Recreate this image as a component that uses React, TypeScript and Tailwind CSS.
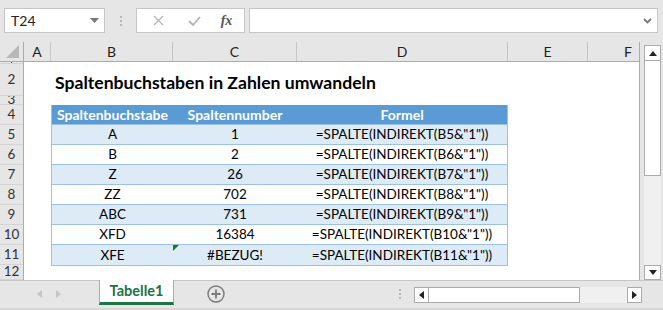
import React from 'react';

const cols = [
  { l: 'A', w: 27 },
  { l: 'B', w: 122 },
  { l: 'C', w: 124 },
  { l: 'D', w: 211 },
  { l: 'E', w: 80 },
];

const rowHeads = [
  { n: '1', h: 2 },
  { n: '2', h: 32 },
  { n: '3', h: 9 },
  { n: '4', h: 20 },
  { n: '5', h: 20 },
  { n: '6', h: 20 },
  { n: '7', h: 20 },
  { n: '8', h: 20 },
  { n: '9', h: 20 },
  { n: '10', h: 20 },
  { n: '11', h: 20 },
  { n: '12', h: 15 },
];

const data = [
  ['A', '1', '=SPALTE(INDIREKT(B5&"1"))'],
  ['B', '2', '=SPALTE(INDIREKT(B6&"1"))'],
  ['Z', '26', '=SPALTE(INDIREKT(B7&"1"))'],
  ['ZZ', '702', '=SPALTE(INDIREKT(B8&"1"))'],
  ['ABC', '731', '=SPALTE(INDIREKT(B9&"1"))'],
  ['XFD', '16384', '=SPALTE(INDIREKT(B10&"1"))'],
  ['XFE', '#BEZUG!', '=SPALTE(INDIREKT(B11&"1"))'],
];

function FormulaBar() {
  return (
    <div className="h-[42px] relative flex items-start pt-[8px] pl-[4px]">
      {/* name box */}
      <div className="w-[101px] h-[25px] bg-white border border-[#c6c6c6] flex items-center pl-[6px] pr-[5px]">
        <span className="flex-1 text-[14px] text-[#222]">T24</span>
        <svg width="9" height="5" viewBox="0 0 9 5"><path d="M0 0h9L4.5 5z" fill="#777" /></svg>
      </div>
      {/* grip dots */}
      <div className="w-[31px] h-[25px] flex flex-col items-center justify-center gap-[2px]">
        <div className="w-[2px] h-[2px] bg-[#b8b8b8]" />
        <div className="w-[2px] h-[2px] bg-[#b8b8b8]" />
        <div className="w-[2px] h-[2px] bg-[#b8b8b8]" />
      </div>
      {/* fx box */}
      <div className="w-[109px] h-[25px] bg-white border border-[#c6c6c6] flex items-center">
        <div className="w-[40px] flex justify-center pl-[2px]">
          <svg width="11" height="11" viewBox="0 0 11 11"><path d="M1 1l9 9M10 1l-9 9" stroke="#b5b5b5" strokeWidth="1.3" /></svg>
        </div>
        <div className="w-[34px] flex justify-center">
          <svg width="13" height="10" viewBox="0 0 13 10"><path d="M1 5l4 4 7-8" stroke="#b5b5b5" strokeWidth="1.8" fill="none" /></svg>
        </div>
        <div className="flex-1 flex justify-center pr-[2px]">
          <span className="text-[14px] italic font-bold text-[#555]" style={{ fontFamily: '"Liberation Serif", serif' }}>fx</span>
        </div>
      </div>
      <div className="w-[4px]" />
      {/* formula input */}
      <div className="w-[409px] h-[25px] bg-white border border-[#c6c6c6] flex items-center justify-end pr-[5px]">
        <svg width="9" height="6" viewBox="0 0 9 6"><path d="M1 1l3.5 3.5L8 1" stroke="#777" strokeWidth="1.8" fill="none" /></svg>
      </div>
    </div>
  );
}

function Sheet() {
  return (
    <div className="flex h-[238px]">
      {/* row headers */}
      <div className="w-[24px] flex flex-col border-r border-[#ababab]">
        <div className="h-[20px] border-b border-[#ababab] relative overflow-hidden">
          <svg className="absolute right-[4px] bottom-[3px]" width="13" height="13" viewBox="0 0 13 13"><path d="M13 0v13H0z" fill="#b8b8b8" /></svg>
        </div>
        {rowHeads.map(r => (
          <div
            key={r.n}
            className="border-b border-[#d4d4d4] flex items-center justify-center overflow-hidden text-[13.5px] text-[#333] leading-none"
            style={{ height: r.h }}
          >
            {r.h > 4 ? r.n : <div className="w-px h-full bg-[#555]" />}
          </div>
        ))}
      </div>
      {/* cells */}
      <div className="w-[616px] flex flex-col border-r border-[#ababab] overflow-hidden">
        <div className="h-[20px] flex border-b border-[#ababab] shrink-0">
          {cols.map(c => (
            <div
              key={c.l}
              className="shrink-0 border-r border-[#c6c6c6] flex items-center justify-center text-[14px] text-[#222]"
              style={{ width: c.w }}
            >
              {c.l}
            </div>
          ))}
          <div className="w-[80px] shrink-0 flex items-center justify-center text-[14px] text-[#222]">F</div>
        </div>
        <div className="flex-1 bg-white flex flex-col">
          <div className="h-[2px]" />
          <div className="h-[32px] flex items-end pl-[31px] pb-[4px]">
            <span className="text-[17.6px] font-bold text-black leading-none">Spaltenbuchstaben in Zahlen umwandeln</span>
          </div>
          <div className="h-[9px]" />
          <div className="ml-[27px] w-[457px] border-x border-b border-[#9bc2e6] flex flex-col">
            <div className="h-[20px] bg-[#5b9bd5] flex text-white font-bold text-[14px] border-b border-[#9bc2e6]">
              <div className="w-[121px] flex items-center justify-center">Spaltenbuchstabe</div>
              <div className="w-[124px] flex items-center justify-center">Spaltennumber</div>
              <div className="flex-1 flex items-center justify-center">Formel</div>
            </div>
            {data.map((d, i) => (
              <div
                key={i}
                className={`h-[20px] flex text-[13.5px] text-black ${i % 2 === 0 ? 'bg-[#ddebf7]' : 'bg-white'} ${i < data.length - 1 ? 'border-b border-[#9bc2e6]' : ''}`}
              >
                <div className="w-[121px] flex items-center justify-center">{d[0]}</div>
                <div className="w-[124px] flex items-center justify-center relative">
                  {i === 6 && (
                    <svg className="absolute left-0 top-0" width="6" height="6" viewBox="0 0 6 6"><path d="M0 0h6L0 6z" fill="#1e7a1e" /></svg>
                  )}
                  {d[1]}
                </div>
                <div className="flex-1 flex items-center justify-center">{d[2]}</div>
              </div>
            ))}
          </div>
        </div>
      </div>
      {/* vertical scrollbar */}
      <div className="w-[23px] flex flex-col pl-[4px] pt-[3px] pr-[2px]">
        <div className="h-[16px] bg-white border border-[#ababab] flex items-center justify-center">
          <svg width="8" height="5" viewBox="0 0 8 5"><path d="M0 5h8L4 0z" fill="#222" /></svg>
        </div>
        <div className="h-[115px] bg-white border-x border-b border-[#ababab]" />
        <div className="flex-1 bg-[#f0f0f0]" />
        <div className="h-[15px] bg-white border border-[#ababab] flex items-center justify-center">
          <svg width="8" height="5" viewBox="0 0 8 5"><path d="M0 0h8L4 5z" fill="#222" /></svg>
        </div>
      </div>
    </div>
  );
}

function TabBar() {
  return (
    <div className="h-[30px] border-t border-[#c6c6c6] flex items-start relative">
      <div className="w-[99px] h-[25px] flex items-center">
        <div className="w-[56px] flex justify-end pr-[14px]">
          <svg width="5" height="8" viewBox="0 0 5 8"><path d="M5 0v8L0 4z" fill="#c4c4c4" /></svg>
        </div>
        <svg width="5" height="8" viewBox="0 0 5 8"><path d="M0 0v8l5-4z" fill="#c4c4c4" /></svg>
      </div>
      <div className="w-[75px] h-[25px] -mt-px bg-white border-x border-[#ababab] border-b-[3px] border-b-[#217346] flex items-center justify-center">
        <span className="text-[14.5px] font-bold text-[#217346]">Tabelle1</span>
      </div>
      <div className="w-[84px] h-[25px] flex items-center justify-center">
        <svg width="18" height="18" viewBox="0 0 18 18">
          <circle cx="9" cy="9" r="8" fill="none" stroke="#7a7a7a" strokeWidth="1.4" />
          <path d="M9 4.5v9M4.5 9h9" stroke="#7a7a7a" strokeWidth="1.8" />
        </svg>
      </div>
      <div className="w-[156px] h-[25px] flex justify-end pr-[13px] items-center">
        <div className="flex flex-col gap-[2px]">
          <div className="w-[2px] h-[2px] bg-[#b8b8b8]" />
          <div className="w-[2px] h-[2px] bg-[#b8b8b8]" />
          <div className="w-[2px] h-[2px] bg-[#b8b8b8]" />
        </div>
      </div>
      <div className="mt-[6px] w-[228px] h-[16px] flex">
        <div className="w-[15px] bg-white border border-[#ababab] flex items-center justify-center">
          <svg width="5" height="8" viewBox="0 0 5 8"><path d="M5 0v8L0 4z" fill="#222" /></svg>
        </div>
        <div className="w-[151px] bg-white border-y border-r border-[#ababab]" />
        <div className="flex-1 bg-[#f0f0f0]" />
        <div className="w-[15px] bg-white border border-[#ababab] flex items-center justify-center">
          <svg width="5" height="8" viewBox="0 0 5 8"><path d="M0 0v8l5-4z" fill="#222" /></svg>
        </div>
      </div>
      <div className="absolute left-0 right-0 bottom-0 h-[2px] bg-[#d8d8d8]" />
    </div>
  );
}

export default function App() {
  return (
    <div
      className="w-[663px] h-[310px] bg-[#e6e6e6] overflow-hidden flex flex-col"
      style={{ fontFamily: 'Lato, "Open Sans", sans-serif' }}
    >
      <FormulaBar />
      <Sheet />
      <TabBar />
    </div>
  );
}
